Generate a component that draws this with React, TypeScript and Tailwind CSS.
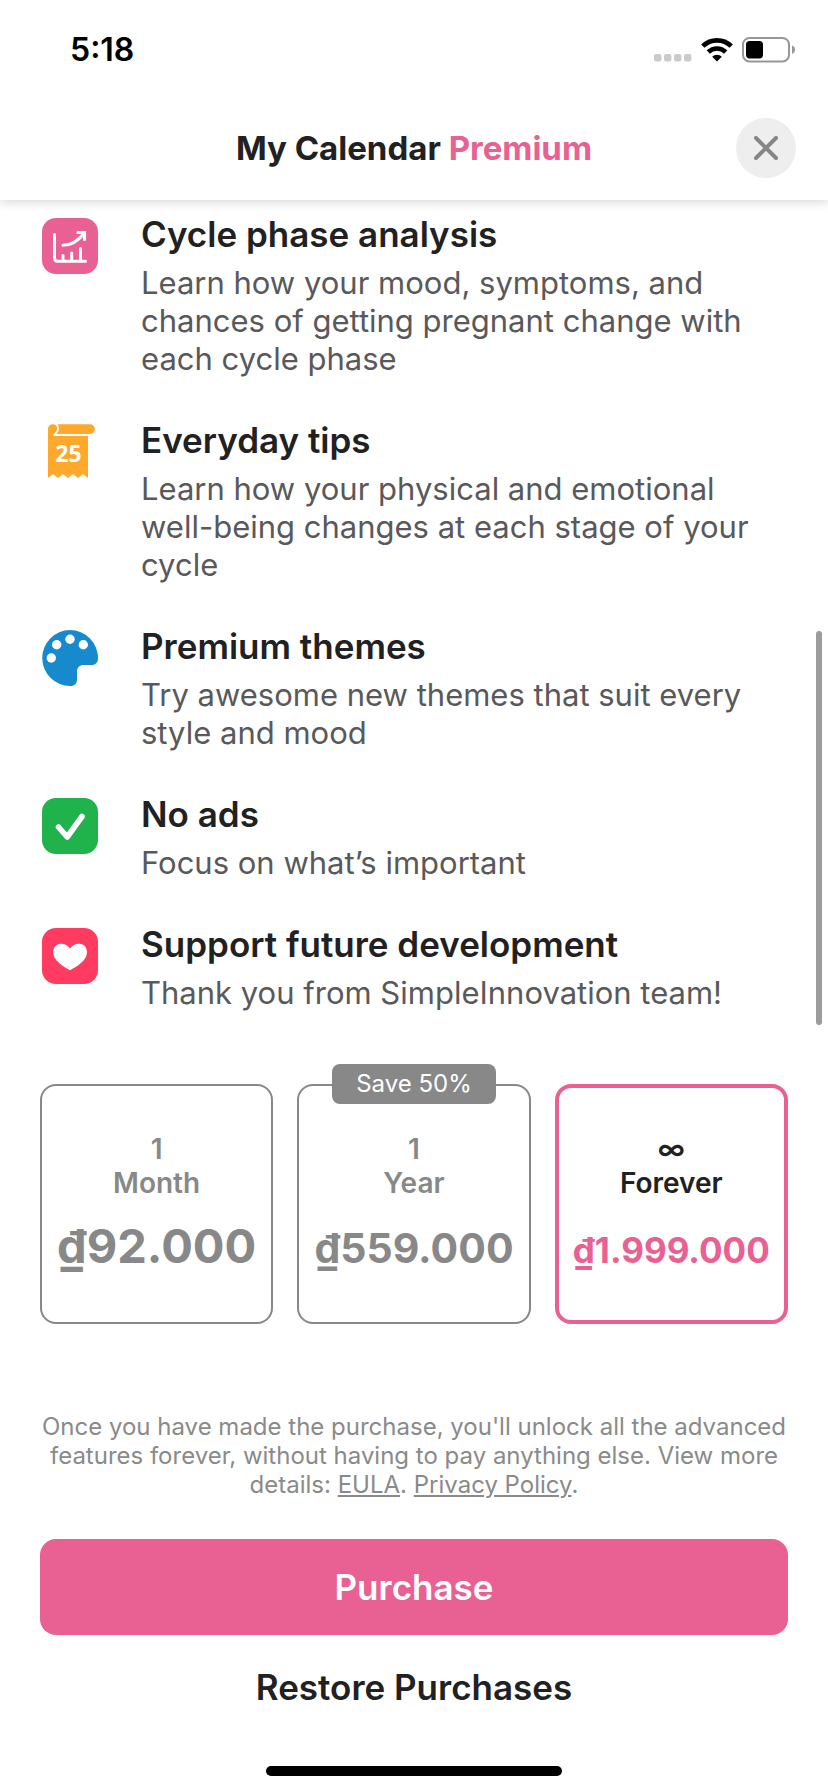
import { useState, type ReactNode } from "react";

function ChartIcon() {
  return (
    <svg viewBox="0 0 56 56" className="size-14" aria-hidden="true">
      <rect width="56" height="56" rx="14" fill="#e86192" />
      <g fill="none" stroke="#fff" strokeWidth="3" strokeLinecap="round" strokeLinejoin="round">
        <path d="M12.5 16.5V40Q12.5 43.2 15.7 43.2H43.5" />
        <path d="M21 42V37.5M29.7 42V35M38.5 42V30.5" />
        <path d="M21 27.3C30 27.3 36 23 42 15.5" />
      </g>
      <path d="M36 14.5H42.5V21.5" fill="none" stroke="#fff" strokeWidth="3.2" strokeLinecap="round" />
    </svg>
  );
}

function TipsIcon() {
  return (
    <svg viewBox="0 0 56 56" className="size-14" aria-hidden="true">
      <g fill="#fea92c">
        <path d="M6 5.5C6 2 8.5 .2 11 .2C14.5 .2 15.5 3 15 5.5C14.4 8.2 12.5 9 11.5 10.3C11 11.2 11.6 12 12.6 12H46V54L41 50L36 54L31 50L26 54L21 50L16 54L11 50L6 54Z" />
        <path d="M15.5 .2H48A4.9 4.9 0 0 1 48 10H14.2C17 7.8 18 3.8 15.5 .2Z" />
      </g>
      <text x="26.5" y="38" textAnchor="middle" className="fill-white font-['Open_Sans',sans-serif] text-[23px] font-bold">
        25
      </text>
    </svg>
  );
}

function PaletteIcon() {
  return (
    <svg viewBox="0 0 56 56" className="size-14" aria-hidden="true">
      <path
        d="M28 0A28 28 0 0 1 56 28.5C56 32.5 53.5 35 49.5 35H42C37.5 35 35 37.5 35 42V49.5C35 53.5 32.5 56 28.5 56A28 28 0 0 1 28 0Z"
        fill="#1789cd"
      />
      <g fill="#fff">
        <circle cx="9.3" cy="28" r="4.7" />
        <circle cx="14.7" cy="14.8" r="4.7" />
        <circle cx="28" cy="9.3" r="4.7" />
        <circle cx="41.3" cy="14.8" r="4.7" />
      </g>
    </svg>
  );
}

function CheckIcon() {
  return (
    <svg viewBox="0 0 56 56" className="size-14" aria-hidden="true">
      <rect width="56" height="56" rx="14" fill="#20b24b" />
      <path d="M16.5 29L25.2 39L40 18.5" fill="none" stroke="#fff" strokeWidth="5.6" strokeLinecap="round" strokeLinejoin="round" />
    </svg>
  );
}

function HeartIcon() {
  return (
    <svg viewBox="0 0 56 56" className="size-14" aria-hidden="true">
      <rect width="56" height="56" rx="14" fill="#ff3b62" />
      <path
        d="M28 20.5C31 16.5 34.5 15.5 37.5 15.8C42 16.2 45 19.5 45 24.2C45 32 36 38 28 42.2C20 38 11.2 32 11.2 24.2C11.2 19.5 14.2 16.2 18.7 15.8C21.7 15.5 25 16.5 28 20.5Z"
        fill="#fff"
      />
    </svg>
  );
}

const features: { icon: ReactNode; title: string; text: string }[] = [
  {
    icon: <ChartIcon />,
    title: "Cycle phase analysis",
    text: "Learn how your mood, symptoms, and chances of getting pregnant change with each cycle phase",
  },
  {
    icon: <TipsIcon />,
    title: "Everyday tips",
    text: "Learn how your physical and emotional well-being changes at each stage of your cycle",
  },
  {
    icon: <PaletteIcon />,
    title: "Premium themes",
    text: "Try awesome new themes that suit every style and mood",
  },
  { icon: <CheckIcon />, title: "No ads", text: "Focus on what’s important" },
  {
    icon: <HeartIcon />,
    title: "Support future development",
    text: "Thank you from SimpleInnovation team!",
  },
];

const plans = [
  { id: "month", count: "1", unit: "Month", price: "₫92.000", size: "text-[47px]", badge: "" },
  { id: "year", count: "1", unit: "Year", price: "₫559.000", size: "text-[41px]", badge: "Save 50%" },
  { id: "forever", count: "∞", unit: "Forever", price: "₫1.999.000", size: "text-[35px]", badge: "" },
];

function StatusBar() {
  return (
    <div className="flex h-24 items-center justify-between pt-1 pr-8 pl-[70px]">
      <span className="text-[32px] leading-9 font-semibold text-black">5:18</span>
      <div className="flex items-center gap-[9px]">
        <svg viewBox="0 0 38 26" className="h-[26px] w-[38px]" fill="#cbcbcd" aria-hidden="true">
          <rect x="0" y="17" width="7.4" height="7.4" rx="2" />
          <rect x="10" y="17" width="7.4" height="7.4" rx="2" />
          <rect x="20" y="17" width="7.4" height="7.4" rx="2" />
          <rect x="30" y="17" width="7.4" height="7.4" rx="2" />
        </svg>
        <svg viewBox="0 0 32 26" className="h-[26px] w-8" aria-hidden="true">
          <g fill="none" stroke="#000" strokeWidth="4.6">
            <path d="M1.8 9.2A20.2 20.2 0 0 1 30.2 9.2" />
            <path d="M7.3 15A12.4 12.4 0 0 1 24.7 15" />
          </g>
          <path d="M16 24.6L11.2 19.8A6.8 6.8 0 0 1 20.8 19.8Z" />
        </svg>
        <svg viewBox="0 0 54 26" className="h-[26px] w-[54px]" aria-hidden="true">
          <rect x="1" y="1" width="46" height="23.4" rx="6.5" fill="none" stroke="#979797" strokeWidth="2" />
          <rect x="4" y="4" width="17" height="17.4" rx="3.6" />
          <path d="M50 8.6Q53 9.6 53 12.7T50 16.8Z" fill="#979797" />
        </svg>
      </div>
    </div>
  );
}

export default function App() {
  const [selected, setSelected] = useState("forever");

  return (
    <div className="relative flex min-h-screen flex-col bg-white font-['Inter','Liberation_Sans',sans-serif] text-[#212123]">
      <header className="relative bg-white shadow-[0_2px_10px_rgba(0,0,0,0.16)]">
        <StatusBar />
        <div className="grid h-[104px] grid-cols-[60px_1fr_60px] items-center px-8">
          <h1 className="col-start-2 text-center text-[33px] leading-10 font-bold">
            My Calendar <span className="text-[#e86192]">Premium</span>
          </h1>
          <button type="button" aria-label="Close" className="flex size-[60px] items-center justify-center rounded-full bg-[#eeeeef]">
            <svg viewBox="0 0 24 24" className="size-6" fill="none" stroke="#868688" strokeWidth="4" strokeLinecap="round" aria-hidden="true">
              <path d="M2 2L22 22M22 2L2 22" />
            </svg>
          </button>
        </div>
      </header>

      <main className="flex flex-1 flex-col px-10 pt-3">
        <ul className="flex flex-col gap-10">
          {features.map((f) => (
            <li key={f.title} className="flex gap-[43px] pr-5 pl-0.5">
              <div className="mt-1.5 shrink-0">{f.icon}</div>
              <div className="flex flex-col gap-2">
                <h2 className="text-[35px] leading-[44px] font-semibold">{f.title}</h2>
                <p className="text-[31px] leading-[38px] text-[#59595b]">{f.text}</p>
              </div>
            </li>
          ))}
        </ul>

        <div role="radiogroup" aria-label="Plan" className="mt-[72px] grid grid-cols-3 gap-6">
          {plans.map((p) => {
            const active = p.id === selected;
            return (
              <label
                key={p.id}
                className={`relative flex h-60 cursor-pointer flex-col items-center rounded-2xl ${
                  active ? "border-4 border-[#e86192] pt-11" : "border-2 border-[#888888] pt-[46px] text-[#888888]"
                }`}
              >
                <input
                  type="radio"
                  name="plan"
                  value={p.id}
                  checked={active}
                  onChange={() => setSelected(p.id)}
                  className="sr-only"
                />
                {p.badge && (
                  <span className="absolute -top-[22px] flex h-10 w-[164px] items-center justify-center rounded-lg bg-[#888888] text-[24px] text-white">
                    {p.badge}
                  </span>
                )}
                <span className="text-[28px] leading-[34px] font-semibold">{p.count}</span>
                <span className="text-[28px] leading-[34px] font-semibold">{p.unit}</span>
                <div className={`mt-4 text-[47px] leading-[60px] font-bold ${active ? "text-[#e86192]" : ""}`}>
                  <span className={p.size}>{p.price}</span>
                </div>
              </label>
            );
          })}
        </div>

        <p className="mt-[88px] text-center text-[24px] leading-[29px] text-[#8a8a8a]">
          Once you have made the purchase, you'll unlock all the advanced features forever, without having to pay anything else. View
          more details:{" "}
          <a href="#eula" className="underline">
            EULA
          </a>
          .{" "}
          <a href="#privacy" className="underline">
            Privacy Policy
          </a>
          .
        </p>

        <button type="button" className="mt-10 h-24 rounded-2xl bg-[#e86192] text-[35px] font-semibold text-white">
          Purchase
        </button>
        <button type="button" className="h-[104px] text-[35px] font-semibold">
          Restore Purchases
        </button>
      </main>

      <div className="mx-auto mb-4 h-2.5 w-[296px] rounded-full bg-black" />
      <div className="absolute top-[631px] right-1.5 h-[394px] w-1.5 rounded-full bg-[#9c9c9e]" />
    </div>
  );
}
